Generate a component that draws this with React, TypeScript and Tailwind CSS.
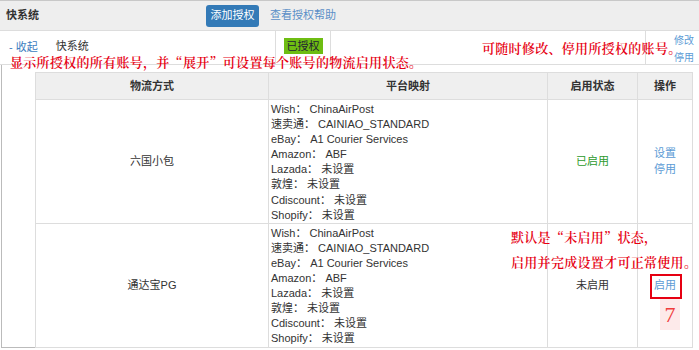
import React from "react";

const FONT = "font-['Liberation_Sans','Noto_Sans_CJK_SC',sans-serif]";
const NOTE = "absolute whitespace-nowrap text-[13px] leading-[16px] font-semibold text-[#e60012] font-['Noto_Serif_CJK_SC','Noto_Sans_CJK_SC',serif] tracking-[0.3px]";

type Row = { name: string; enabled: boolean; mappings: [string, string][] };

const MAPPINGS: [string, string][] = [
  ["Wish", "ChinaAirPost"],
  ["速卖通", "CAINIAO_STANDARD"],
  ["eBay", "A1 Courier Services"],
  ["Amazon", "ABF"],
  ["Lazada", "未设置"],
  ["敦煌", "未设置"],
  ["Cdiscount", "未设置"],
  ["Shopify", "未设置"],
];

const ROWS: Row[] = [
  { name: "六国小包", enabled: true, mappings: MAPPINGS },
  { name: "通达宝PG", enabled: false, mappings: MAPPINGS },
];

export default function App() {
  return (
    <div className={`relative w-[699px] h-[350px] bg-white text-[11px] text-[#333] overflow-hidden ${FONT}`}>
      {/* header bar */}
      <div className="flex items-center h-[31px] bg-[#eeeeee] border-t border-[#c8c8c8] border-b border-b-[#dddddd]">
        <span className="ml-[6px] w-[200px] font-semibold">快系统</span>
        <button className="h-[22px] w-[53px] rounded-[3px] bg-[#337ab7] text-white text-[11px]">添加授权</button>
        <a className="ml-[11px] text-[#5b8fc7]">查看授权帮助</a>
      </div>

      {/* account row */}
      <div className="flex h-[34px] border-b border-[#dddddd]">
        <div className="w-[275px] flex items-center">
          <a className="ml-[9px] text-[#3c7dc0]">- 收起</a>
          <span className="ml-[18px] -mt-[2px]">快系统</span>
        </div>
        <div className="w-[55px] border-l border-[#dddddd] flex items-center justify-center">
          <span className="mt-[-3px] h-[16px] px-[3px] leading-[16px] bg-[#6ebd12] text-[#223]">已授权</span>
        </div>
        <div className="w-[315px] border-l border-[#dddddd]" />
        <div className="flex-1 border-l border-[#dddddd] flex flex-col items-end pr-[5px] pt-[1px] leading-[17px] text-[10px] text-[#5b9bd5]">
          <a>修改</a>
          <a>停用</a>
        </div>
      </div>

      {/* expanded panel */}
      <div className="ml-[1px] w-[691px] h-[283px] border-l border-b border-[#bbbbbb] pl-[33px] pt-[7px]">
        <table className="w-[657px] table-fixed border-collapse border border-[#dddddd]">
          <colgroup>
            <col className="w-[233px]" />
            <col className="w-[279px]" />
            <col className="w-[90px]" />
            <col className="w-[55px]" />
          </colgroup>
          <thead>
            <tr className="h-[27px] bg-[#efefef] font-bold">
              <th className="border border-[#dddddd]">物流方式</th>
              <th className="border border-[#dddddd]">平台映射</th>
              <th className="border border-[#dddddd]">启用状态</th>
              <th className="border border-[#dddddd]">操作</th>
            </tr>
          </thead>
          <tbody>
            {ROWS.map((row) => (
              <tr key={row.name} className="h-[122px]">
                <td className="border border-[#dddddd] text-center align-middle">{row.name}</td>
                <td className="border border-[#dddddd] px-[2px] pt-[2px] pb-0 leading-[15.1px] align-top">
                  {row.mappings.map(([k, v]) => (
                    <div key={k}>
                      {k}：&nbsp;{v}
                    </div>
                  ))}
                </td>
                <td className={`border border-[#dddddd] text-center ${row.enabled ? "text-[#2c9a2c]" : "text-[#333]"}`}>
                  {row.enabled ? "已启用" : "未启用"}
                </td>
                <td className="border border-[#dddddd] text-center text-[#5b9bd5] leading-[16px]">
                  {row.enabled ? (
                    <div>
                      <div>设置</div>
                      <div>停用</div>
                    </div>
                  ) : (
                    <span className="inline-block mt-[-2px]">启用</span>
                  )}
                </td>
              </tr>
            ))}
          </tbody>
        </table>
      </div>

      {/* annotations */}
      <div className={`${NOTE} left-[10px] top-[54px]`}>显示所授权的所有账号，并“展开”可设置每个账号的物流启用状态。</div>
      <div className={`${NOTE} left-[482px] top-[40px]`}>可随时修改、停用所授权的账号。</div>
      <div className={`${NOTE} left-[511px] top-[229px]`}>默认是“未启用”状态，</div>
      <div className={`${NOTE} left-[511px] top-[254px]`}>启用并完成设置才可正常使用。</div>
      <div className="absolute left-[650px] top-[274px] w-[32px] h-[25px] border-2 border-[#e60012]" />
      <div className="absolute left-[660px] top-[299px] w-[20px] h-[31px] bg-[#fdeaea] flex items-center justify-center text-[22px] text-[#f03c3c] font-['Liberation_Serif',serif]">
        7
      </div>
    </div>
  );
}
